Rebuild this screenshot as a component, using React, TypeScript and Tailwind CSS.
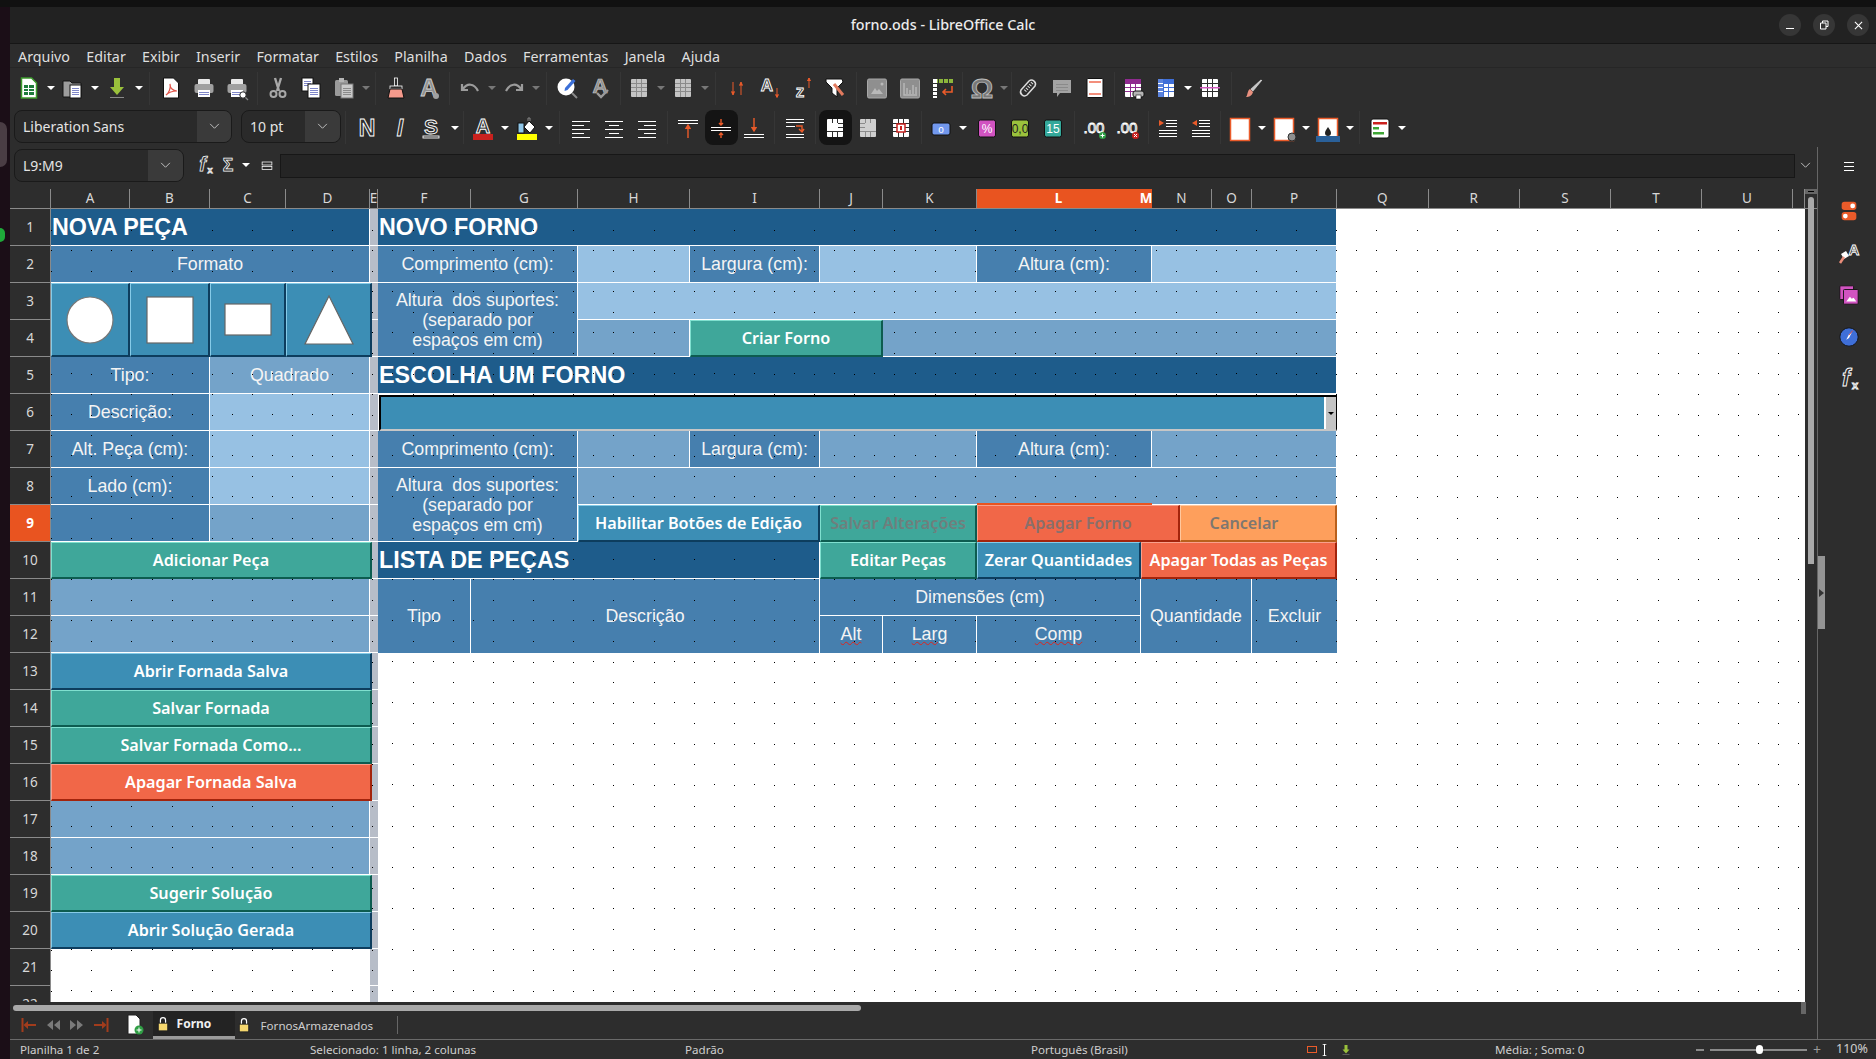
import type { ReactNode } from "react";

const ui = "font-['Noto_Sans',sans-serif]";
const cellFont = "font-['Liberation_Sans',Arial,sans-serif]";

const hollow = { fill: "#2d2d2d", stroke: "#fff", strokeWidth: 0.9, fontFamily: "Liberation Sans", fontWeight: 700 };

const lines = (xs: number, xe: number, ys: number[], color: string, h = 1) =>
  ys.map((y) => <rect key={y} x={xs} y={y} width={xe - xs} height={h} fill={color} />);

const printer = (
  <>
    <rect x="6" y="3" width="12" height="6" rx="1" fill="#e8e8e8" />
    <rect x="2.5" y="8" width="19" height="9" rx="2" fill="#a0a0a0" />
    <rect x="6" y="14" width="12" height="7" fill="#fff" />
    {lines(7, 17, [16, 18], "#7f86c8")}
  </>
);

const gridIcon = (color: string, line: string) => (
  <>
    <rect x="4" y="3" width="16" height="18" rx="1" fill={color} />
    {lines(4, 20, [7, 11, 15], line)}
    <rect x="9" y="3" width="1" height="18" fill={line} />
    <rect x="14" y="3" width="1" height="18" fill={line} />
  </>
);

const chip = (bg: string, label: string, color = "#fff") => (
  <>
    <rect x="3.5" y="4" width="17" height="17" rx="2" fill={bg} stroke="#111" />
    <text x="12" y="17" textAnchor="middle" fontSize="12" fontFamily="Liberation Sans" fill={color}>{label}</text>
  </>
);

const coil = (
  <text x="11" y="17" textAnchor="middle" fontSize="15" fontFamily="Liberation Sans" fill="#2d2d2d" stroke="#fff" strokeWidth=".9">.00</text>
);

const icons: Record<string, ReactNode> = {
  new: (
    <>
      <path d="M4.5 2h10l5 5v15h-15z" fill="#fff" stroke="#3c9b2c" strokeWidth="1.5" />
      <rect x="7" y="9" width="10" height="10" fill="#1e7c3b" />
      {lines(7, 17, [12, 15], "#fff")}
      <rect x="11" y="9" width="1" height="10" fill="#fff" />
    </>
  ),
  open: (
    <>
      <path d="M2 5h7l2 2h9v14H2z" fill="#9c9c9c" stroke="#151515" />
      <rect x="9" y="9" width="11" height="13" fill="#fff" stroke="#151515" />
      {lines(11, 18, [12, 14, 16, 18], "#7f86c8")}
    </>
  ),
  save: (
    <>
      <path d="M9 2h6v9h4l-7 8-7-8h4z" fill="#9ac13b" />
      <rect x="5" y="21" width="14" height="1" fill="#8a8a8a" />
    </>
  ),
  pdf: (
    <>
      <path d="M4.5 2h10l5 5v15h-15z" fill="#fff" stroke="#111" />
      <path d="M7 19c3-2 5-7 4-11 0 4 3 7 7 7-4 0-8 1-11 4z" fill="none" stroke="#e2574c" strokeWidth="1.2" />
    </>
  ),
  print: printer,
  preview: (
    <>
      {printer}
      <circle cx="18" cy="19" r="3.2" fill="#fff" stroke="#222" />
      <path d="M20.5 21.5l2.5 2.5" stroke="#888" strokeWidth="1.3" />
    </>
  ),
  cut: (
    <>
      <path d="M9 2l4 13M15 2l-4 13" stroke="#a8a8a8" strokeWidth="2.4" />
      <circle cx="7.5" cy="18" r="3" fill="none" stroke="#a8a8a8" strokeWidth="2" />
      <circle cx="16.5" cy="18" r="3" fill="none" stroke="#a8a8a8" strokeWidth="2" />
    </>
  ),
  copy: (
    <>
      <rect x="3" y="2" width="11" height="13" fill="#fff" stroke="#111" />
      {lines(5, 12, [5, 7, 9], "#7f86c8")}
      <rect x="9" y="8" width="12" height="14" fill="#fff" stroke="#111" />
      {lines(11, 19, [12, 14, 16, 18], "#7f86c8")}
    </>
  ),
  paste: (
    <>
      <rect x="3" y="4" width="13" height="16" rx="1.5" fill="#9a9a9a" />
      <rect x="7" y="2" width="5" height="4" fill="#b5b5b5" />
      <rect x="9" y="8" width="12" height="14" fill="#c9c9c9" stroke="#777" />
      {lines(11, 19, [12, 14, 16, 18], "#8a8a8a")}
    </>
  ),
  brush: (
    <>
      <rect x="10.5" y="2" width="3" height="8" fill="#2d2d2d" stroke="#fff" strokeWidth=".8" />
      <rect x="6" y="10" width="12" height="3" fill="#2d2d2d" stroke="#fff" strokeWidth=".8" />
      <path d="M6 13h12l2 9H4z" fill="#f59a8c" stroke="#111" />
    </>
  ),
  clearA: (
    <>
      <text x="12" y="20" textAnchor="middle" fontSize="24" fontFamily="Liberation Sans" fontWeight="700" fill="#8f8f8f" stroke="#d0d0d0" strokeWidth=".8">A</text>
      <circle cx="19" cy="20" r="3" fill="#a0a0a0" />
    </>
  ),
  undo: <path d="M4 8v6h6M5 13c4-6 11-6 15 2" fill="none" stroke="#9c9c9c" strokeWidth="2.2" />,
  redo: <path d="M20 8v6h-6M19 13c-4-6-11-6-15 2" fill="none" stroke="#9c9c9c" strokeWidth="2.2" />,
  find: (
    <>
      <circle cx="10" cy="11" r="8.5" fill="#fff" />
      <path d="M9 12l8-9 2.5 2-8 9-3 1z" fill="#3b6fd8" />
      <path d="M16 17l5 5" stroke="#8a8a8a" strokeWidth="2" />
    </>
  ),
  spell: (
    <>
      <text x="11" y="17" textAnchor="middle" fontSize="21" fontFamily="Liberation Sans" fontWeight="700" fill="#8f8f8f" stroke="#c8c8c8" strokeWidth=".7">A</text>
      <path d="M8 17l4 4 7-7" fill="none" stroke="#9a9a9a" strokeWidth="2.4" />
    </>
  ),
  grid: gridIcon("#c4c4c4", "#8b8b8b"),
  sort: <path d="M8 6v12M6.5 15.5L8 19l1.5-3.5M16 19V7M14.5 9.5L16 6l1.5 3.5" fill="#ea5b2a" stroke="#ea5b2a" strokeWidth="1" />,
  sortA: (
    <>
      <text x="9" y="15" textAnchor="middle" fontSize="17" {...hollow}>A</text>
      <path d="M19 12v9M17.5 18.5l1.5 3 1.5-3" fill="#ea5b2a" stroke="#ea5b2a" strokeWidth="1" />
    </>
  ),
  sortZ: (
    <>
      <text x="9" y="21" textAnchor="middle" fontSize="17" {...hollow}>z</text>
      <path d="M18 12V2M16.5 5l1.5-3 1.5 3" fill="#ea5b2a" stroke="#ea5b2a" strokeWidth="1" />
    </>
  ),
  filter: (
    <>
      <path d="M2 3h16l1 3-6 6v9l-5-4v-5L2 6z" fill="#fff" stroke="#111" />
      <path d="M10 8l9 11" stroke="#e27a5e" strokeWidth="3" />
    </>
  ),
  image: (
    <>
      <rect x="2.5" y="3" width="19" height="19" rx="1.5" fill="#8f8f8f" stroke="#a8a8a8" />
      <path d="M6 18l4-6 2 3 2-2 4 5z" fill="#b9b9b9" />
      <circle cx="17" cy="8" r="1.5" fill="#b9b9b9" />
    </>
  ),
  chart: (
    <>
      <rect x="2.5" y="3" width="19" height="19" rx="1.5" fill="#8f8f8f" stroke="#a8a8a8" />
      <path d="M6 7v12h13M9 18v-6M12 18v-4M15 18V9M18 18v-7" fill="none" stroke="#b9b9b9" strokeWidth="1.4" />
    </>
  ),
  pivot: (
    <>
      <rect x="2" y="3" width="20" height="4" fill="#8cb63c" />
      {[7, 12, 17].map((x) => <rect key={x} x={x} y="3" width="1" height="4" fill="#2d2d2d" />)}
      <rect x="2" y="3" width="4" height="19" fill="#fff" />
      {lines(2, 6, [7, 11, 15, 19], "#2d2d2d")}
      <path d="M21 10v6h-9M15 13l-3 3 3 3" fill="none" stroke="#ea5b2a" strokeWidth="1.6" />
    </>
  ),
  omega: <text x="12" y="22" textAnchor="middle" fontSize="28" fontFamily="Liberation Sans" fontWeight="700" fill="#777" stroke="#bdbdbd" strokeWidth=".9">Ω</text>,
  link: (
    <>
      <path d="M4 14l8-9a4 4 0 016 5l-8 9a4 4 0 01-6-5z" fill="none" stroke="#ddd" strokeWidth="1.5" />
      <path d="M8 15l8-9" stroke="#ddd" strokeWidth="3" strokeDasharray="1 1.5" />
    </>
  ),
  comment: (
    <>
      <path d="M3 4h18v13H10l-3 4v-4H3z" fill="#a3a3a3" />
      {lines(6, 18, [8, 11, 14], "#8a8a8a")}
    </>
  ),
  header: (
    <>
      <rect x="4" y="2.5" width="16" height="19" rx="1" fill="#fff" stroke="#111" />
      <rect x="6" y="5" width="12" height="2" fill="#f38f7c" />
      <rect x="6" y="17" width="12" height="2" fill="#f38f7c" />
    </>
  ),
  printArea: (
    <>
      {gridIcon("#fff", "#8f2a8f")}
      <rect x="4" y="3" width="16" height="4" fill="#8f2a8f" />
      <rect x="12" y="15" width="11" height="6" rx="2" fill="#b5b5b5" stroke="#111" />
      <rect x="15" y="19" width="5" height="4" fill="#fff" stroke="#111" strokeWidth=".6" />
    </>
  ),
  freeze: (
    <>
      {gridIcon("#fff", "#3f6fd8")}
      <rect x="4" y="3" width="16" height="4" fill="#3f6fd8" />
      <rect x="4" y="3" width="5" height="18" fill="#5b83dd" />
      {lines(4, 9, [7, 11, 15], "#fff")}
    </>
  ),
  split: (
    <>
      {gridIcon("#fff", "#2d2d2d")}
      <rect x="2" y="11" width="20" height="1.5" fill="#d25bc0" />
    </>
  ),
  draw: (
    <>
      <path d="M20 3l1.5 1.5L12 16l-3-3z" fill="#c5c5c5" stroke="#111" strokeWidth=".6" />
      <path d="M9 13l3 3c-1 4-4 5-7 5 2-2 1-6 4-8z" fill="#e9907f" />
    </>
  ),
  bold: <text x="12" y="20" textAnchor="middle" fontSize="23" {...hollow}>N</text>,
  italic: <text x="12" y="20" textAnchor="middle" fontSize="23" fontStyle="italic" {...hollow}>I</text>,
  shadow: (
    <>
      <text x="10" y="18" textAnchor="middle" fontSize="21" {...hollow}>S</text>
      <rect x="2" y="20" width="16" height="2" fill="none" stroke="#fff" strokeWidth=".9" />
    </>
  ),
  fontColor: (
    <>
      <text x="12" y="17" textAnchor="middle" fontSize="20" {...hollow}>A</text>
      <rect x="2" y="18" width="20" height="6" fill="#c9211e" />
    </>
  ),
  bgColor: (
    <>
      <rect x="3" y="7" width="6" height="10" fill="#8fc6e8" stroke="#111" />
      <path d="M14 5l6 6-5 6-6-6z" fill="#fff" stroke="#111" />
      <path d="M13 5V2h2v3" fill="none" stroke="#888" />
      <rect x="2" y="18" width="20" height="6" fill="#ffff00" />
    </>
  ),
  left: <>{lines(3, 21, [5, 13, 21], "#fff")}{lines(3, 15, [9, 17], "#fff")}</>,
  center: <>{lines(3, 21, [5, 13, 21], "#fff")}{lines(7, 17, [9, 17], "#fff")}</>,
  right: <>{lines(3, 21, [5, 13, 21], "#fff")}{lines(9, 21, [9, 17], "#fff")}</>,
  vTop: (
    <>
      {lines(2, 22, [4, 7], "#fff")}
      <path d="M12 22V10M9.5 13l2.5-4 2.5 4" fill="#ea5b2a" stroke="#ea5b2a" strokeWidth="1.4" />
    </>
  ),
  vMid: (
    <>
      {lines(2, 22, [11, 14], "#fff")}
      <path d="M12 3v6M10 7l2 2 2-2M12 22v-5M10 19l2-2 2 2" fill="#ea5b2a" stroke="#ea5b2a" strokeWidth="1.4" />
    </>
  ),
  vBot: (
    <>
      <path d="M12 2v12M9.5 11l2.5 4 2.5-4" fill="#ea5b2a" stroke="#ea5b2a" strokeWidth="1.4" />
      {lines(2, 22, [18, 21], "#fff")}
    </>
  ),
  wrap: (
    <>
      {lines(3, 21, [3, 6, 18, 21], "#fff")}
      {lines(3, 12, [10], "#fff")}
      <path d="M13 10h6v6M16 13l3 3 2-3" fill="none" stroke="#ea5b2a" strokeWidth="1.4" />
    </>
  ),
  merge: (
    <>
      {gridIcon("#fff", "#2d2d2d")}
      <rect x="9" y="7" width="6" height="8" fill="#fff" />
      <rect x="4" y="7" width="11" height="8" fill="#fff" />
    </>
  ),
  mergeOff: (
    <>
      {gridIcon("#cfcfcf", "#8b8b8b")}
      <rect x="9" y="7" width="11" height="8" fill="#cfcfcf" />
    </>
  ),
  unmerge: (
    <>
      {gridIcon("#fff", "#2d2d2d")}
      <rect x="8" y="8" width="8" height="8" fill="#fff" stroke="#c9211e" strokeWidth="1.5" />
      <rect x="11" y="10" width="2" height="4" fill="#c9211e" />
    </>
  ),
  currency: (
    <>
      <rect x="3" y="7" width="18" height="12" rx="2" fill="#7298ee" stroke="#111" />
      <text x="12" y="16.5" textAnchor="middle" fontSize="10" fontFamily="Liberation Sans" fill="#fff">o</text>
    </>
  ),
  percent: chip("#d153c1", "%"),
  number: chip("#9bc23c", "0,0", "#222"),
  date: chip("#34a89a", "15"),
  decAdd: (
    <>
      {coil}
      <circle cx="19.5" cy="19.5" r="3.5" fill="#2f9e44" />
      <path d="M17.5 19.5h4M19.5 17.5v4" stroke="#fff" />
    </>
  ),
  decDel: (
    <>
      {coil}
      <circle cx="19.5" cy="19.5" r="3.5" fill="#c9211e" />
      <path d="M18 18l3 3M21 18l-3 3" stroke="#fff" />
    </>
  ),
  indent: (
    <>
      <path d="M3 4l5 3-5 3z" fill="#ea5b2a" />
      {lines(10, 21, [4, 7, 10], "#fff")}
      {lines(3, 21, [14, 17, 20], "#fff")}
    </>
  ),
  outdent: (
    <>
      <path d="M8 4L3 7l5 3z" fill="#ea5b2a" />
      {lines(10, 21, [4, 7, 10], "#fff")}
      {lines(3, 21, [14, 17, 20], "#fff")}
    </>
  ),
  border: <rect x="2.5" y="2.5" width="19" height="22" fill="#fff" stroke="#ea5b2a" strokeWidth="1.5" />,
  borderStyle: (
    <>
      <rect x="2.5" y="2.5" width="19" height="22" fill="#fff" stroke="#ea5b2a" strokeWidth="1.5" />
      <circle cx="20" cy="21" r="4" fill="#8f8f8f" stroke="#2d2d2d" />
    </>
  ),
  borderColor: (
    <>
      <rect x="2.5" y="2.5" width="19" height="20" fill="#fff" stroke="#ea5b2a" strokeWidth="1.5" />
      <path d="M12 11c2 3 3 4 3 6a3 3 0 01-6 0c0-2 1-3 3-6z" fill="#222" />
      <rect x="0" y="20" width="24" height="6" fill="#2a6099" />
    </>
  ),
  cond: (
    <>
      <rect x="3" y="3" width="18" height="19" rx="2" fill="#fff" stroke="#111" />
      <rect x="5" y="6" width="14" height="2.5" fill="#c9211e" />
      <rect x="5" y="11" width="6" height="2.5" fill="#3fa535" />
      <rect x="5" y="16" width="11" height="2.5" fill="#3fa535" />
    </>
  ),
  toggles: (
    <>
      <rect x="4" y="2" width="16" height="9" rx="3" fill="#ea5b2a" />
      <circle cx="16" cy="6.5" r="2.6" fill="#fff" />
      <rect x="4" y="13" width="16" height="9" rx="3" fill="#ea5b2a" />
      <circle cx="8" cy="17.5" r="2.6" fill="#fff" />
    </>
  ),
  styles: (
    <>
      <text x="17" y="14" textAnchor="middle" fontSize="15" {...hollow}>A</text>
      <path d="M4 13l5-3 3 5-5 3z" fill="#fff" />
      <path d="M7 16l-4 6" stroke="#ea8d7a" strokeWidth="2.5" />
    </>
  ),
  gallery: (
    <>
      <rect x="2" y="2" width="15" height="15" rx="1" fill="#d153c1" stroke="#111" />
      <rect x="6" y="6" width="16" height="16" rx="1" fill="#d153c1" stroke="#111" />
      <path d="M9 19l4-5 2 2 2-1 3 4z" fill="#fff" />
    </>
  ),
  compass: (
    <>
      <circle cx="12" cy="12" r="10" fill="#3f6fd8" stroke="#111" />
      <path d="M9 15l3-6 3-2-3 6z" fill="#fff" />
      <path d="M12 10l4-5" stroke="#e2574c" />
    </>
  ),
  fx: (
    <>
      <text x="9" y="19" textAnchor="middle" fontSize="24" fontStyle="italic" {...hollow}>f</text>
      <text x="18" y="22" textAnchor="middle" fontSize="11" {...hollow}>x</text>
    </>
  ),
  sigma: <text x="12" y="19" textAnchor="middle" fontSize="21" {...hollow}>Σ</text>,
  equals: <>{[8, 14].map((y) => <rect key={y} x="5.5" y={y} width="13" height="4" fill="none" stroke="#fff" />)}</>,
};

const Icon = ({ name, className = "w-[24px] h-[24px]" }: { name: string; className?: string }) => (
  <svg viewBox="0 0 24 24" className={`${className} overflow-visible`}>{icons[name]}</svg>
);

const Btn = ({ name, active }: { name: string; active?: boolean }) => (
  <div className={`w-[33px] h-[35px] shrink-0 flex items-center justify-center ${active ? "bg-[#141414] rounded-lg" : ""}`}>
    <Icon name={name} />
  </div>
);

const Arr = ({ off }: { off?: boolean }) => (
  <div className="w-[11px] shrink-0 flex justify-center">
    <div className={`w-0 h-0 border-x-[4px] border-x-transparent border-t-[4px] ${off ? "border-t-[#777]" : "border-t-white"}`} />
  </div>
);

const Sep = ({ className }: { className: string }) => (
  <div className={`${className} h-[33px] shrink-0 flex justify-center`}>
    <div className="w-px h-full bg-[#363636]" />
  </div>
);

const Chevron = () => (
  <svg viewBox="0 0 12 8" className="w-[11px] h-[7px]">
    <path d="M1 1l5 5 5-5" fill="none" stroke="#d0d0d0" strokeWidth="1" />
  </svg>
);

const Combo = ({ label, className, arrowClass }: { label: string; className: string; arrowClass: string }) => (
  <div className={`${className} h-[33px] shrink-0 flex rounded-lg border border-[#1a1a1a] bg-[#2a2a2a] overflow-hidden`}>
    <div className="flex-1 flex items-center pl-[8px] text-[14px] text-[#e4e4e4]">{label}</div>
    <div className={`${arrowClass} flex items-center justify-center bg-[#3a3a3a]`}><Chevron /></div>
  </div>
);

const columns = ["A", "B", "C", "D", "E", "F", "G", "H", "I", "J", "K", "L", "M", "N", "O", "P", "Q", "R", "S", "T", "U", ""];
const gridCols = "grid-cols-[79px_80px_76px_84px_8px_93px_107px_112px_130px_63px_94px_164px_11px_60px_40px_85px_91.5px_91.5px_91px_91px_91px_12px]";

// pontos da grade de impressao, em duas camadas
const buildDots = () => {
  let d = "";
  for (let y = 20.5; y < 793; y += 20.575) {
    for (let x = 0.14; x < 1754; x += 40.16) d += `M${Math.round(x)} ${Math.round(y)}h1v1h-1z`;
  }
  for (let y = 40.5; y < 793; y += 41.15) {
    for (let x = 20.2; x < 1754; x += 40.16) d += `M${Math.round(x)} ${Math.round(y)}h1v1h-1z`;
  }
  return d;
};
const dots = buildDots();

const dark = "bg-[#1e5c8b]";
const mid = "bg-[#467fae]";
const light = "bg-[#97c1e3]";
const semi = "bg-[#74a3c9]";

const cellBase = `border-r border-b border-white flex items-center justify-center text-center text-[17.8px] leading-[20px] text-[#f4f4f4] ${cellFont}`;
const heading = `border-r border-b border-white flex items-center pl-[1px] text-[23.3px] font-bold text-white ${cellFont} ${dark}`;
const spellErr = "mb-[2px] underline decoration-wavy decoration-[#e0241b] decoration-1";

const btnBase = `relative z-20 flex items-center justify-center text-[16.2px] font-semibold whitespace-nowrap ${ui} border-t border-l border-b-2 border-r-2`;
const teal = `${btnBase} bg-[#3fa79a] border-t-[#7fe0cf] border-l-[#7fe0cf] border-b-[#0d5c50] border-r-[#0d5c50]`;
const blue = `${btnBase} bg-[#3c8eb5] border-t-[#86cbe8] border-l-[#86cbe8] border-b-[#0d3d5e] border-r-[#0d3d5e]`;
const red = `${btnBase} bg-[#f16748] border-t-[#f9a08c] border-l-[#f9a08c] border-b-[#a3240c] border-r-[#a3240c]`;
const orange = `${btnBase} bg-[#fe9f5c] border-t-[#ffc89e] border-l-[#ffc89e] border-b-[#b9601c] border-r-[#b9601c]`;

const Shape = ({ children, className }: { children: ReactNode; className: string }) => (
  <div className={`relative z-20 row-start-3 row-span-2 flex items-center justify-center border-t border-l border-b-2 border-r-2 bg-[#3c8eb5] border-t-[#86cbe8] border-l-[#86cbe8] border-b-[#0d3d5e] border-r-[#0d3d5e] ${className}`}>
    <svg viewBox="0 0 50 50" className="w-[50px] h-[50px]">{children}</svg>
  </div>
);

const supportLabel = (
  <>
    Altura&nbsp; dos suportes:
    <br />
    (separado por
    <br />
    espaços em cm)
  </>
);

const Sheet = () => (
  <div className={`relative grid ${gridCols} grid-rows-[repeat(22,37px)] bg-white w-[1754px] h-[793px] overflow-hidden`}>
    <svg className="absolute inset-0 z-10 w-[1754px] h-[793px] pointer-events-none" shapeRendering="crispEdges">
      <path d={dots} fill="#000" />
    </svg>

    {/* coluna E, faixa cinza */}
    {Array.from({ length: 22 }, (_, i) => (
      <div key={i} className="col-start-5 bg-[#b7bdc8] border-b border-white" style={{ gridRowStart: i + 1 }} />
    ))}

    {/* linha 1 */}
    <div className={`${heading} col-start-1 col-span-4 row-start-1`}>NOVA PEÇA</div>
    <div className={`${heading} col-start-6 col-span-11 row-start-1`}>NOVO FORNO</div>

    {/* linha 2 */}
    <div className={`${cellBase} ${mid} col-start-1 col-span-4 row-start-2`}>Formato</div>
    <div className={`${cellBase} ${mid} col-start-6 col-span-2 row-start-2`}>Comprimento (cm):</div>
    <div className={`${cellBase} ${light} col-start-8 row-start-2`} />
    <div className={`${cellBase} ${mid} col-start-9 row-start-2`}>Largura (cm):</div>
    <div className={`${cellBase} ${light} col-start-10 col-span-2 row-start-2`} />
    <div className={`${cellBase} ${mid} col-start-12 col-span-2 row-start-2`}>Altura (cm):</div>
    <div className={`${cellBase} ${light} col-start-14 col-span-3 row-start-2`} />

    {/* linhas 3 e 4 */}
    <Shape className="col-start-1">
      <circle cx="25" cy="25" r="23" fill="#fff" stroke="#777" strokeWidth="1.2" />
    </Shape>
    <Shape className="col-start-2">
      <rect x="2" y="2" width="46" height="46" fill="#fff" stroke="#666" strokeWidth="1.2" />
    </Shape>
    <Shape className="col-start-3">
      <rect x="2" y="9" width="46" height="31" fill="#fff" stroke="#666" strokeWidth="1.2" />
    </Shape>
    <Shape className="col-start-4 mr-[-2px]">
      <path d="M25 1l24 48H1z" fill="#fff" stroke="#666" strokeWidth="1.2" />
    </Shape>
    <div className={`${cellBase} ${mid} col-start-6 col-span-2 row-start-3 row-span-2`}><span>{supportLabel}</span></div>
    <div className={`${cellBase} ${light} col-start-8 col-span-9 row-start-3`} />
    <div className={`${cellBase} ${semi} col-start-8 row-start-4`} />
    <div className={`${teal} text-white col-start-9 col-span-2 row-start-4`}>Criar Forno</div>
    <div className={`${cellBase} ${semi} col-start-11 col-span-6 row-start-4`} />

    {/* linha 5 */}
    <div className={`${cellBase} ${mid} col-start-1 col-span-2 row-start-5`}>Tipo:</div>
    <div className={`${cellBase} ${semi} col-start-3 col-span-2 row-start-5`}>Quadrado</div>
    <div className={`${heading} col-start-6 col-span-11 row-start-5`}>ESCOLHA UM FORNO</div>

    {/* linha 6 */}
    <div className={`${cellBase} ${mid} col-start-1 col-span-2 row-start-6`}>Descrição:</div>
    <div className={`${cellBase} ${light} col-start-3 col-span-2 row-start-6`} />
    <div className="relative z-20 col-start-6 col-span-11 row-start-6 flex bg-[#3c8eb5] border-t-2 border-l-2 border-r border-black border-b-2 border-b-[#c6c6c6] mt-[1px] ml-[1px]">
      <div className="flex-1" />
      <div className="w-[12px] flex items-center justify-center bg-[#c4c4c4] border-l-2 border-white">
        <div className="w-0 h-0 border-x-[3px] border-x-transparent border-t-[3px] border-t-black" />
      </div>
    </div>

    {/* linha 7 */}
    <div className={`${cellBase} ${mid} col-start-1 col-span-2 row-start-7`}>Alt. Peça (cm):</div>
    <div className={`${cellBase} ${light} col-start-3 col-span-2 row-start-7`} />
    <div className={`${cellBase} ${mid} col-start-6 col-span-2 row-start-7`}>Comprimento (cm):</div>
    <div className={`${cellBase} ${semi} col-start-8 row-start-7`} />
    <div className={`${cellBase} ${mid} col-start-9 row-start-7`}>Largura (cm):</div>
    <div className={`${cellBase} ${semi} col-start-10 col-span-2 row-start-7`} />
    <div className={`${cellBase} ${mid} col-start-12 col-span-2 row-start-7`}>Altura (cm):</div>
    <div className={`${cellBase} ${semi} col-start-14 col-span-3 row-start-7`} />

    {/* linha 8 */}
    <div className={`${cellBase} ${mid} col-start-1 col-span-2 row-start-8`}>Lado (cm):</div>
    <div className={`${cellBase} ${light} col-start-3 col-span-2 row-start-8`} />
    <div className={`${cellBase} ${mid} col-start-6 col-span-2 row-start-8 row-span-2`}><span>{supportLabel}</span></div>
    <div className={`${cellBase} ${semi} col-start-8 col-span-9 row-start-8`} />

    {/* linha 9 */}
    <div className={`${cellBase} ${mid} col-start-1 col-span-2 row-start-9`} />
    <div className={`${cellBase} ${semi} col-start-3 col-span-2 row-start-9`} />
    <div className={`${blue} text-white col-start-8 col-span-2 row-start-9`}>Habilitar Botões de Edição</div>
    <div className={`${teal} text-[#6f7f7d] col-start-10 col-span-2 row-start-9`}>Salvar Alterações</div>
    <div className="relative z-20 col-start-12 col-span-5 row-start-9 flex">
      <div className={`${red} text-[#8a6f6b] w-[203px]`}>Apagar Forno</div>
      <div className={`${orange} text-[#7e7770] flex-1 pr-[28px]`}>Cancelar</div>
      <div className="absolute left-0 top-[-2px] w-[175px] h-[2px] bg-[#e95420]" />
    </div>

    {/* linha 10 */}
    <div className={`${teal} text-white col-start-1 col-span-4 row-start-10 mr-[-2px]`}>Adicionar Peça</div>
    <div className={`${heading} col-start-6 col-span-4 row-start-10`}>LISTA DE PEÇAS</div>
    <div className={`${teal} text-white col-start-10 col-span-2 row-start-10`}>Editar Peças</div>
    <div className={`${blue} text-white col-start-12 row-start-10`}>Zerar Quantidades</div>
    <div className={`${red} text-white col-start-13 col-span-4 row-start-10`}>Apagar Todas as Peças</div>

    {/* linhas 11 e 12 */}
    <div className={`${cellBase} ${semi} col-start-1 col-span-4 row-start-11`} />
    <div className={`${cellBase} ${semi} col-start-1 col-span-4 row-start-12`} />
    <div className={`${cellBase} ${mid} !border-b-0 col-start-6 row-start-11 row-span-2`}>Tipo</div>
    <div className={`${cellBase} ${mid} !border-b-0 col-start-7 col-span-3 row-start-11 row-span-2`}>Descrição</div>
    <div className={`${cellBase} ${mid} col-start-10 col-span-3 row-start-11`}>Dimensões (cm)</div>
    <div className={`${cellBase} ${mid} !border-b-0 col-start-10 row-start-12`}><span className={spellErr}>Alt</span></div>
    <div className={`${cellBase} ${mid} !border-b-0 col-start-11 row-start-12`}><span className={spellErr}>Larg</span></div>
    <div className={`${cellBase} ${mid} !border-b-0 col-start-12 row-start-12`}><span className={spellErr}>Comp</span></div>
    <div className={`${cellBase} ${mid} !border-b-0 col-start-13 col-span-3 row-start-11 row-span-2`}>Quantidade</div>
    <div className={`${cellBase} ${mid} !border-b-0 !border-r-0 col-start-16 row-start-11 row-span-2`}>Excluir</div>

    {/* botoes da coluna esquerda */}
    <div className={`${blue} text-white col-start-1 col-span-4 row-start-13 mr-[-2px]`}>Abrir Fornada Salva</div>
    <div className={`${teal} text-white col-start-1 col-span-4 row-start-14 mr-[-2px]`}>Salvar Fornada</div>
    <div className={`${teal} text-white col-start-1 col-span-4 row-start-15 mr-[-2px]`}>Salvar Fornada Como...</div>
    <div className={`${red} text-white col-start-1 col-span-4 row-start-16 mr-[-2px]`}>Apagar Fornada Salva</div>
    <div className={`${cellBase} ${semi} col-start-1 col-span-4 row-start-17`} />
    <div className={`${cellBase} ${semi} col-start-1 col-span-4 row-start-18`} />
    <div className={`${teal} text-white col-start-1 col-span-4 row-start-19 mr-[-2px]`}>Sugerir Solução</div>
    <div className={`${blue} text-white col-start-1 col-span-4 row-start-20 mr-[-2px]`}>Abrir Solução Gerada</div>
  </div>
);

const Lock = () => (
  <svg viewBox="0 0 14 18" className="w-[12px] h-[16px] shrink-0">
    <path d="M4 8V4.5a3 3 0 016 0V8" fill="none" stroke="#fff" strokeWidth="1.4" />
    <rect x="1.5" y="8" width="11" height="9" fill="#f5d76e" stroke="#222" />
  </svg>
);

const Nav = ({ children }: { children: ReactNode }) => (
  <svg viewBox="0 0 16 14" className="w-[16px] h-[14px] shrink-0">{children}</svg>
);

export default function App() {
  return (
    <div className={`w-[1876px] h-[1059px] overflow-hidden flex flex-col bg-[#111] ${ui}`}>
      <div className="h-[7px] shrink-0 bg-[#111]" />
      <div className="flex flex-1 min-h-0">
        {/* faixa do dock */}
        <div className="relative w-[10px] shrink-0 bg-[#1b0e17]">
          <div className="absolute left-0 top-[115px] w-[7px] h-[45px] rounded-r-lg bg-[#4a3d44]" />
          <div className="absolute left-0 top-[221px] w-[5px] h-[14px] rounded-r-full bg-[#1fa83a]" />
        </div>

        <div className="flex-1 min-w-0 flex flex-col bg-[#2d2d2d]">
          {/* barra de titulo */}
          <div className="relative h-[37px] shrink-0 bg-[#222222] border-b border-[#161616] flex items-center justify-center">
            <span className="text-[14.3px] font-medium text-[#ececec] mb-[1px]">forno.ods - LibreOffice Calc</span>
            <div className="absolute right-[7px] top-[7px] flex gap-[12px]">
              <div className="w-[22px] h-[22px] rounded-full bg-[#363636] flex items-center justify-center">
                <div className="w-[8px] h-px bg-white mt-[6px]" />
              </div>
              <div className="w-[22px] h-[22px] rounded-full bg-[#363636] flex items-center justify-center">
                <svg viewBox="0 0 10 10" className="w-[10px] h-[10px]"><path d="M1.5 3h5.5v6H1.5zM3.5 3V1H9v5.5H7" fill="none" stroke="#fff" /></svg>
              </div>
              <div className="w-[22px] h-[22px] rounded-full bg-[#363636] flex items-center justify-center">
                <svg viewBox="0 0 10 10" className="w-[9px] h-[9px]"><path d="M1 1l8 8M9 1l-8 8" stroke="#fff" strokeWidth="1.2" /></svg>
              </div>
            </div>
          </div>

          {/* menu */}
          <div className="h-[24px] shrink-0 flex items-center gap-[16.3px] pl-[8px] pt-[3px] text-[14.3px] text-[#dfdfdf] border-b border-[#262626]">
            {["Arquivo", "Editar", "Exibir", "Inserir", "Formatar", "Estilos", "Planilha", "Dados", "Ferramentas", "Janela", "Ajuda"].map((m) => (
              <span key={m}>{m}</span>
            ))}
          </div>

          {/* barra padrao */}
          <div className="h-[40px] shrink-0 flex items-center pl-[2.5px]">
            <Btn name="new" /><Arr /><Btn name="open" /><Arr /><Btn name="save" /><Arr />
            <Sep className="w-[10px]" />
            <Btn name="pdf" /><Btn name="print" /><Btn name="preview" />
            <Sep className="w-[7.5px]" />
            <Btn name="cut" /><Btn name="copy" /><Btn name="paste" /><Arr off />
            <Sep className="w-[8.5px]" />
            <Btn name="brush" /><Btn name="clearA" />
            <Sep className="w-[7.5px]" />
            <Btn name="undo" /><Arr off /><Btn name="redo" /><Arr off />
            <Sep className="w-[10.5px]" />
            <Btn name="find" /><Btn name="spell" />
            <Sep className="w-[5px]" />
            <Btn name="grid" /><Arr off /><Btn name="grid" /><Arr off />
            <Sep className="w-[10px]" />
            <Btn name="sort" /><Btn name="sortA" /><Btn name="sortZ" /><Btn name="filter" />
            <Sep className="w-[8px]" />
            <Btn name="image" /><Btn name="chart" /><Btn name="pivot" />
            <Sep className="w-[6px]" />
            <Btn name="omega" /><Arr off />
            <Sep className="w-[3px]" />
            <Btn name="link" /><Btn name="comment" /><Btn name="header" />
            <Sep className="w-[5px]" />
            <Btn name="printArea" /><Btn name="freeze" /><Arr /><Btn name="split" />
            <Sep className="w-[10px]" />
            <Btn name="draw" />
          </div>

          {/* barra de formatacao */}
          <div className="h-[39px] shrink-0 flex items-center pl-[4px]">
            <div className="mb-[2px]"><Combo label="Liberation Sans" className="w-[218px]" arrowClass="w-[34px]" /></div>
            <div className="w-[9px] shrink-0" />
            <div className="mb-[2px]"><Combo label="10 pt" className="w-[100px]" arrowClass="w-[35px]" /></div>
            <Sep className="w-[9px]" />
            <Btn name="bold" /><Btn name="italic" /><Btn name="shadow" /><Arr />
            <Sep className="w-[6.5px]" />
            <Btn name="fontColor" /><Arr /><Btn name="bgColor" /><Arr />
            <Sep className="w-[10px]" />
            <Btn name="left" /><Btn name="center" /><Btn name="right" />
            <Sep className="w-[8px]" />
            <Btn name="vTop" /><Btn name="vMid" active /><Btn name="vBot" />
            <Sep className="w-[8px]" />
            <Btn name="wrap" />
            <Sep className="w-[7px]" />
            <Btn name="merge" active /><Btn name="mergeOff" /><Btn name="unmerge" />
            <Sep className="w-[7px]" />
            <Btn name="currency" /><Arr />
            <div className="w-[2px] shrink-0" />
            <Btn name="percent" /><Btn name="number" /><Btn name="date" />
            <Sep className="w-[9px]" />
            <Btn name="decAdd" /><Btn name="decDel" />
            <Sep className="w-[7px]" />
            <Btn name="indent" /><Btn name="outdent" />
            <Sep className="w-[6px]" />
            <Btn name="border" /><Arr /><Btn name="borderStyle" /><Arr /><Btn name="borderColor" /><Arr />
            <Sep className="w-[8px]" />
            <Btn name="cond" /><Arr />
          </div>

          <div className="flex flex-1 min-h-0">
            <div className="flex-1 min-w-0 flex flex-col">
              {/* barra de formula */}
              <div className="h-[42px] shrink-0 flex items-start pl-[4px]">
                <div className="mt-[2px]">
                  <Combo label="L9:M9" className="w-[170px]" arrowClass="w-[35px]" />
                </div>
                <div className="ml-[11px] mt-[8px] flex items-center">
                  <Icon name="fx" className="w-[20px] h-[20px]" />
                  <div className="w-[3px]" />
                  <Icon name="sigma" className="w-[20px] h-[20px]" />
                  <div className="w-[4px]" />
                  <div className="w-0 h-0 border-x-[4px] border-x-transparent border-t-[4px] border-t-white" />
                  <div className="w-[8px]" />
                  <Icon name="equals" className="w-[18px] h-[18px]" />
                </div>
                <div className="ml-[4px] mt-[7px] w-[1515px] h-[24px] bg-[#252525] border border-[#171717]" />
                <div className="ml-[5px] mt-[15px]"><Chevron /></div>
              </div>

              {/* cabecalho de colunas */}
              <div className="h-[20px] shrink-0 flex border-b border-[#8a8a8a]">
                <div className="w-[41px] shrink-0 border-r border-[#8a8a8a]" />
                <div className={`grid ${gridCols} w-[1754px] overflow-hidden`}>
                  {columns.map((c, i) => (
                    <div
                      key={i}
                      className={`flex items-center justify-center text-[13.5px] leading-none border-r ${
                        c === "L" || c === "M"
                          ? "bg-[#e95420] text-white font-bold border-[#e95420]"
                          : "text-[#d8d8d8] border-[#8a8a8a]"
                      }`}
                    >
                      {c}
                    </div>
                  ))}
                </div>
                <div className="w-[12px] h-[5px] bg-[#666] flex items-center justify-center">
                  <div className="w-[6px] h-px bg-black" />
                </div>
              </div>

              <div className="flex h-[793px] shrink-0">
                {/* cabecalho de linhas */}
                <div className="w-[41px] shrink-0 h-[793px] overflow-hidden flex flex-col border-r border-[#8a8a8a]">
                  {Array.from({ length: 22 }, (_, i) => i + 1).map((r) => (
                    <div
                      key={r}
                      className={`h-[37px] shrink-0 flex items-center justify-center text-[13.5px] border-b border-[#8a8a8a] ${
                        r === 9 ? "bg-[#e95420] text-white font-bold" : "text-[#d8d8d8]"
                      }`}
                    >
                      {r}
                    </div>
                  ))}
                </div>
                <Sheet />
                {/* barra de rolagem vertical */}
                <div className="flex-1 pl-[3px]">
                  <div className="w-[6px] h-[367px] bg-[#a9a9a9] rounded-t-sm mt-[-12px]" />
                </div>
              </div>

              {/* barra de rolagem horizontal */}
              <div className="relative h-[9px] shrink-0 pl-[3px] pt-[3px]">
                <div className="w-[848px] h-[6px] rounded-full bg-[#a9a9a9]" />
                <div className="absolute right-[11px] top-0 w-[5px] h-[12px] bg-[#666]" />
              </div>

              {/* abas */}
              <div className="flex-1 flex items-stretch pl-[10.5px] text-[11.6px] whitespace-nowrap">
                <div className="flex items-center gap-[8.2px]">
                  <Nav><path d="M1.5 0v14M15 7H5" stroke="#a23c1c" strokeWidth="2" /><path d="M7 3L2.5 7 7 11z" fill="#a23c1c" /></Nav>
                  <Nav><path d="M8 2L2 7l6 5zM15 2L9 7l6 5z" fill="#7a7a7a" /></Nav>
                  <Nav><path d="M1 2l6 5-6 5zM8 2l6 5-6 5z" fill="#7a7a7a" /></Nav>
                  <Nav><path d="M14.5 0v14M1 7h10" stroke="#a23c1c" strokeWidth="2" /><path d="M9 3l4.5 4L9 11z" fill="#a23c1c" /></Nav>
                </div>
                <div className="flex items-center ml-[16.5px] mr-[9px]">
                  <svg viewBox="0 0 18 22" className="w-[18px] h-[22px]">
                    <path d="M2 1h8l4 4v15H2z" fill="#fff" stroke="#222" />
                    <circle cx="13" cy="16" r="4.5" fill="#2f9e44" />
                    <path d="M10.5 16h5M13 13.5v5" stroke="#fff" />
                  </svg>
                </div>
                <div className="w-[82px] bg-[#232323] border-b-[3px] border-[#9a9a9a] flex items-center pl-[4px] gap-[8px]">
                  <Lock />
                  <span className="font-bold text-[12px] text-[#f0f0f0]">Forno</span>
                </div>
                <div className="flex items-center pl-[3px] gap-[11px] text-[#cfcfcf] w-[162px]">
                  <Lock />
                  <span className="mt-[2px]">FornosArmazenados</span>
                </div>
                <div className="self-center w-px h-[18px] bg-[#666]" />
              </div>
            </div>

            {/* barra lateral */}
            <div className="relative w-[59px] shrink-0 border-l border-[#666] flex flex-col items-center pl-[3px]">
              <div className="h-[38px] mb-[5px] flex flex-col justify-center gap-[3px] w-[10px]">
                <div className="h-px bg-white" /><div className="h-px bg-white" /><div className="h-px bg-white" />
              </div>
              <div className="h-[42px] flex items-center"><Icon name="toggles" className="w-[22px] h-[22px]" /></div>
              <div className="h-[42px] flex items-center"><Icon name="styles" className="w-[24px] h-[24px]" /></div>
              <div className="h-[42px] flex items-center"><Icon name="gallery" className="w-[22px] h-[22px]" /></div>
              <div className="h-[42px] flex items-center"><Icon name="compass" className="w-[22px] h-[22px]" /></div>
              <div className="h-[42px] flex items-center"><Icon name="fx" className="w-[24px] h-[24px]" /></div>
              <div className="absolute left-0 top-[409px] w-[7px] h-[73px] bg-[#949494] flex items-center justify-center">
                <div className="w-0 h-0 border-y-[4px] border-y-transparent border-l-[5px] border-l-[#333]" />
              </div>
            </div>
          </div>

          {/* barra de status */}
          <div className="h-[20px] shrink-0 flex items-center border-t border-[#6a6a6a] text-[11.6px] text-[#cfcfcf] whitespace-nowrap">
            <div className="w-[300px] shrink-0 pl-[10px]">Planilha 1 de 2</div>
            <div className="w-[375px] shrink-0">Selecionado: 1 linha, 2 colunas</div>
            <div className="w-[346px] shrink-0">Padrão</div>
            <div className="w-[276px] shrink-0">Português (Brasil)</div>
            <div className="w-[10px] h-[7px] shrink-0 border border-[#ea5b2a]" />
            <div className="w-[5px] shrink-0" />
            <div className="w-[5px] h-[12px] shrink-0 border-x-2 border-y border-white border-x-transparent bg-[linear-gradient(#fff,#fff)] bg-[length:1px_100%] bg-center bg-no-repeat" />
            <div className="w-[13px] shrink-0" />
            <Icon name="save" className="w-[12px] h-[12px] shrink-0" />
            <div className="w-[143px] shrink-0" />
            <div className="w-[201px] shrink-0">Média: ; Soma: 0</div>
            <div className="w-[8px] h-[2px] shrink-0 bg-[#8a8a8a]" />
            <div className="relative w-[97px] h-[2px] shrink-0 bg-[#8a8a8a] mx-[6px]">
              <div className="absolute left-[46px] top-[-4px] w-[7px] h-[9px] rounded-full bg-white" />
            </div>
            <div className="w-[8px] shrink-0 text-[#9a9a9a] text-[14px] leading-none">+</div>
            <div className="ml-[15px] shrink-0 text-[12.5px]">110%</div>
          </div>
        </div>
      </div>
    </div>
  );
}
